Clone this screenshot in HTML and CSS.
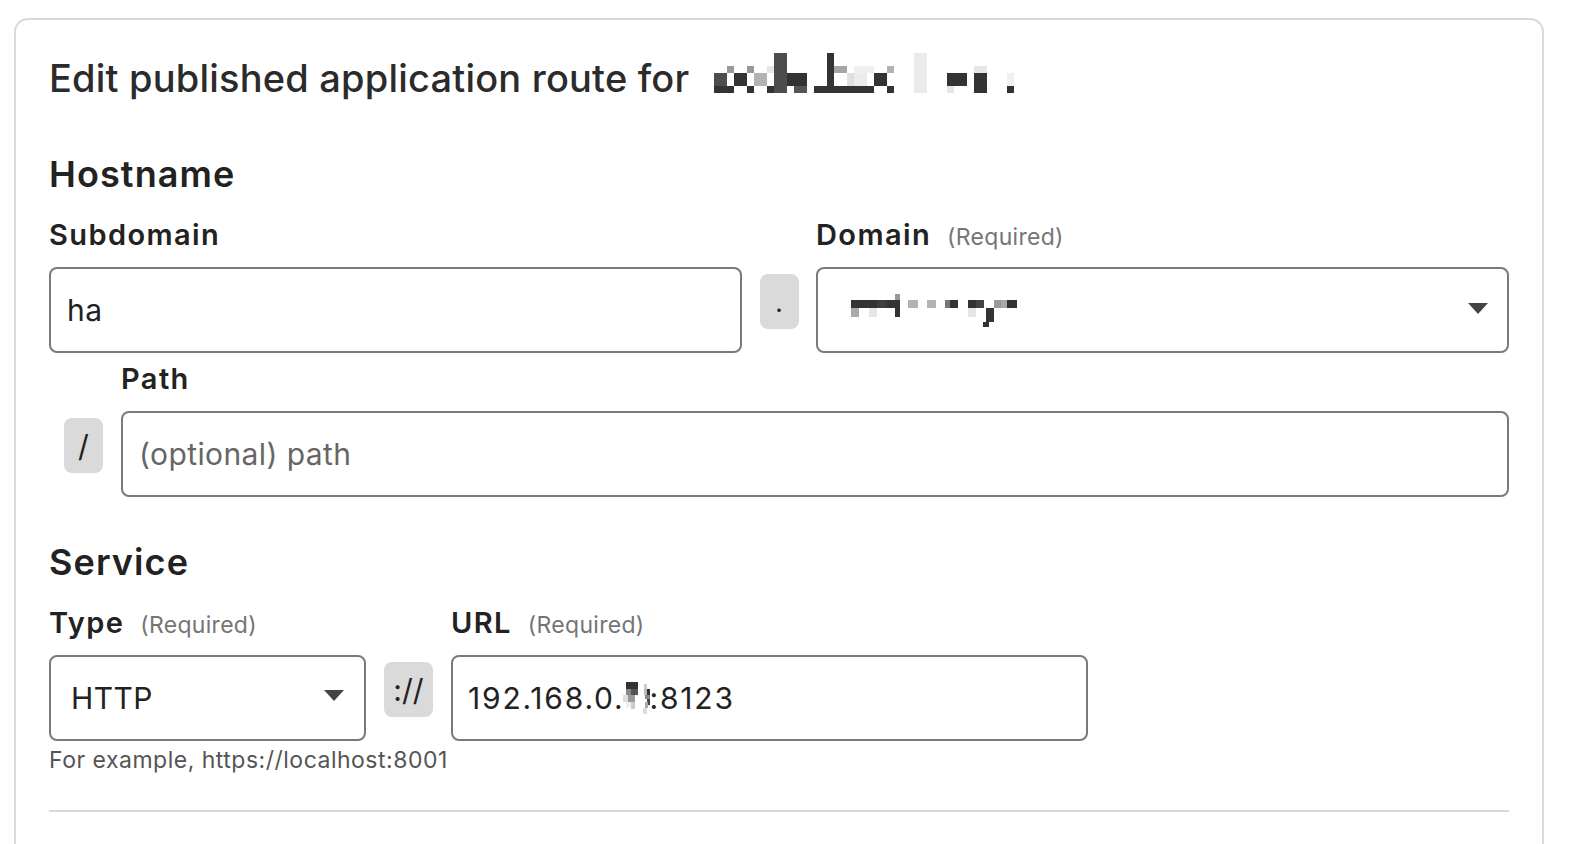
FILE: index.html
```html
<!DOCTYPE html>
<html lang="en">
<head>
<meta charset="utf-8">
<title>Edit published application route</title>
<link rel="stylesheet" href="styles.css">
</head>
<body>
<div class="card">
  <h1 class="title">Edit published application route for <svg class="mosaic title-mosaic" width="300" height="40" viewBox="0 0 900 120" shape-rendering="crispEdges">
    <rect x="180" y="0" width="40" height="120" fill="#4d4d4d"/>
    <rect x="340" y="0" width="20" height="100" fill="#333"/>
    <rect x="600" y="0" width="40" height="120" fill="#ebebeb"/>
    <rect x="40" y="40" width="20" height="20" fill="#999"/>
    <rect x="100" y="40" width="20" height="20" fill="#999"/>
    <rect x="160" y="40" width="20" height="20" fill="#e6e6e6"/>
    <rect x="360" y="40" width="40" height="20" fill="#a6a6a6"/>
    <rect x="420" y="40" width="60" height="20" fill="#f0f0f0"/>
    <rect x="520" y="40" width="20" height="20" fill="#b3b3b3"/>
    <rect x="780" y="40" width="40" height="20" fill="#e6e6e6"/>
    <rect x="0" y="60" width="40" height="40" fill="#4d4d4d"/>
    <rect x="60" y="60" width="40" height="40" fill="#333"/>
    <rect x="120" y="60" width="40" height="40" fill="#b3b3b3"/>
    <rect x="220" y="60" width="60" height="40" fill="#333"/>
    <rect x="400" y="60" width="20" height="40" fill="#e0e0e0"/>
    <rect x="420" y="60" width="40" height="40" fill="#ebebeb"/>
    <rect x="480" y="60" width="40" height="40" fill="#333"/>
    <rect x="700" y="60" width="60" height="40" fill="#333"/>
    <rect x="780" y="60" width="40" height="40" fill="#333"/>
    <rect x="880" y="60" width="20" height="40" fill="#f0f0f0"/>
    <rect x="0" y="100" width="60" height="20" fill="#333"/>
    <rect x="100" y="100" width="20" height="20" fill="#333"/>
    <rect x="160" y="100" width="20" height="20" fill="#333"/>
    <rect x="240" y="100" width="40" height="20" fill="#555"/>
    <rect x="300" y="100" width="180" height="20" fill="#333"/>
    <rect x="520" y="100" width="20" height="20" fill="#333"/>
    <rect x="700" y="100" width="20" height="20" fill="#e6e6e6"/>
    <rect x="780" y="100" width="40" height="20" fill="#333"/>
    <rect x="880" y="100" width="20" height="20" fill="#333"/>
  </svg></h1>

  <h2 class="section host-section">Hostname</h2>
  <div class="grid host-grid">
    <label class="label">Subdomain</label>
    <span></span>
    <label class="label">Domain<span class="req">(Required)</span></label>

    <div class="input"><span class="value">ha</span></div>
    <div class="sep sep-dot">.</div>
    <div class="input select">
      <svg class="mosaic domain-mosaic" width="168" height="33" viewBox="0 0 505 100" shape-rendering="crispEdges">
        <rect x="135" y="0" width="15" height="18" fill="#999"/>
        <rect x="0" y="18" width="80" height="25" fill="#333"/>
        <rect x="80" y="18" width="30" height="25" fill="#3d3d3d"/>
        <rect x="110" y="18" width="25" height="25" fill="#333"/>
        <rect x="135" y="18" width="15" height="52" fill="#333"/>
        <rect x="175" y="18" width="30" height="25" fill="#b3b3b3"/>
        <rect x="230" y="18" width="30" height="25" fill="#b3b3b3"/>
        <rect x="285" y="18" width="15" height="25" fill="#777"/>
        <rect x="300" y="18" width="25" height="25" fill="#333"/>
        <rect x="355" y="18" width="25" height="25" fill="#333"/>
        <rect x="380" y="18" width="25" height="25" fill="#444"/>
        <rect x="435" y="18" width="20" height="25" fill="#999"/>
        <rect x="455" y="18" width="20" height="25" fill="#aaa"/>
        <rect x="475" y="18" width="30" height="25" fill="#333"/>
        <rect x="0" y="43" width="25" height="27" fill="#aaa"/>
        <rect x="55" y="43" width="25" height="27" fill="#e6e6e6"/>
        <rect x="355" y="43" width="25" height="27" fill="#e6e6e6"/>
        <rect x="410" y="43" width="25" height="42" fill="#333"/>
        <rect x="400" y="85" width="20" height="15" fill="#333"/>
      </svg>
      <span class="caret"></span>
    </div>
  </div>

  <div class="grid path-grid">
    <span></span>
    <label class="label">Path</label>
    <div class="sep sep-slash">/</div>
    <div class="input"><span class="placeholder">(optional) path</span></div>
  </div>

  <h2 class="section service-section">Service</h2>
  <div class="grid service-grid">
    <label class="label">Type<span class="req">(Required)</span></label>
    <span></span>
    <label class="label">URL<span class="req">(Required)</span></label>

    <div class="input select type-select"><span class="value">HTTP</span><span class="caret"></span></div>
    <div class="sep sep-scheme">://</div>
    <div class="input url-input"><span class="value ip">192.168.0.<svg class="mosaic ip-mosaic" width="27" height="32" viewBox="0 0 80 95" shape-rendering="crispEdges">
        <rect x="8" y="0" width="37" height="20" fill="#333"/>
        <rect x="8" y="20" width="17" height="20" fill="#888"/>
        <rect x="25" y="20" width="20" height="20" fill="#555"/>
        <rect x="0" y="40" width="15" height="20" fill="#ddd"/>
        <rect x="15" y="40" width="20" height="20" fill="#999"/>
        <rect x="10" y="60" width="15" height="15" fill="#eee"/>
        <rect x="25" y="60" width="12" height="20" fill="#ccc"/>
        <rect x="62" y="5" width="10" height="15" fill="#ccc"/>
        <rect x="62" y="20" width="10" height="20" fill="#bbb"/>
        <rect x="72" y="20" width="8" height="20" fill="#333"/>
        <rect x="66" y="40" width="14" height="10" fill="#888"/>
        <rect x="72" y="50" width="8" height="18" fill="#444"/>
        <rect x="64" y="60" width="10" height="18" fill="#aaa"/>
        <rect x="60" y="78" width="12" height="17" fill="#ddd"/>
      </svg>:8123</span></div>

    <p class="help">For example, https://localhost:8001</p>
  </div>

  <hr class="divider">
</div>
</body>
</html>
```

FILE: styles.css
```css
* { box-sizing: border-box; }

html, body {
  margin: 0;
  padding: 0;
  background: #ffffff;
}

body {
  font-family: Inter, "Noto Sans", "Liberation Sans", sans-serif;
  color: #222222;
  overflow: hidden;
}

.card {
  margin: 18px 0 0 14px;
  width: 1530px;
  height: 826px;
  border: 2px solid #dadada;
  border-bottom: none;
  border-radius: 14px 14px 0 0;
  padding: 33px 33px 0 33px;
}

.title {
  margin: 0;
  font-size: 38px;
  line-height: 44px;
  font-weight: 500;
  color: #2b2b2b;
  letter-spacing: 0.2px;
  white-space: nowrap;
}

.title-mosaic {
  margin-left: 14px;
  vertical-align: -1px;
}

.mosaic { display: inline-block; }

.section {
  margin: 0;
  font-size: 36px;
  line-height: 40px;
  font-weight: 600;
  color: #222222;
  letter-spacing: 1.1px;
}

.host-section { margin-top: 54px; }
.service-section { margin-top: 45px; }

.grid {
  display: grid;
  row-gap: 15px;
  margin-top: 24px;
}

.host-grid { grid-template-columns: 693px 74px 693px; }
.path-grid { grid-template-columns: 72px 1388px; margin-top: 9px; }
.service-grid { grid-template-columns: 317px 85px 637px; }

.label {
  display: block;
  font-size: 29px;
  line-height: 34px;
  font-weight: 600;
  color: #222222;
  letter-spacing: 1.4px;
  white-space: nowrap;
}

.req {
  font-size: 23px;
  line-height: 20px;
  font-weight: 400;
  color: #757575;
  letter-spacing: 0.3px;
  margin-left: 16px;
}

.input {
  height: 86px;
  border: 2px solid #7a7a7a;
  border-radius: 8px;
  display: flex;
  align-items: center;
  padding: 0 16px;
  font-size: 30px;
  letter-spacing: 0.4px;
  color: #222222;
  position: relative;
}

.value { white-space: nowrap; display: inline-flex; align-items: center; }
.value.ip { letter-spacing: 1.8px; }
.placeholder { color: #666666; }

.select { padding-left: 32px; }
.type-select { padding-left: 20px; }
.url-input { padding-left: 15px; }

.ip-mosaic { margin: 0 0 0 -2px; }

.caret {
  position: absolute;
  right: 19px;
  top: 50%;
  margin-top: -7px;
  width: 0;
  height: 0;
  border-left: 10px solid transparent;
  border-right: 10px solid transparent;
  border-top: 11px solid #444444;
}

.type-select .caret { right: 20px; margin-top: -8px; }

.sep {
  margin-top: 7px;
  height: 55px;
  width: 39px;
  background: #dadada;
  border-radius: 8px;
  display: flex;
  align-items: center;
  justify-content: center;
  font-size: 30px;
  color: #222222;
  justify-self: center;
  align-self: start;
}

.sep-dot { font-size: 26px; padding-top: 2px; }
.sep-slash { justify-self: start; margin-left: 15px; }
.sep-scheme { width: 49px; }

.help {
  grid-column: 1 / 4;
  margin: -9px 0 0 0;
  font-size: 23px;
  line-height: 26px;
  letter-spacing: 0.5px;
  color: #555555;
}

.divider {
  margin: 37px 0 0 0;
  border: none;
  height: 2px;
  background: #dadada;
}
```
